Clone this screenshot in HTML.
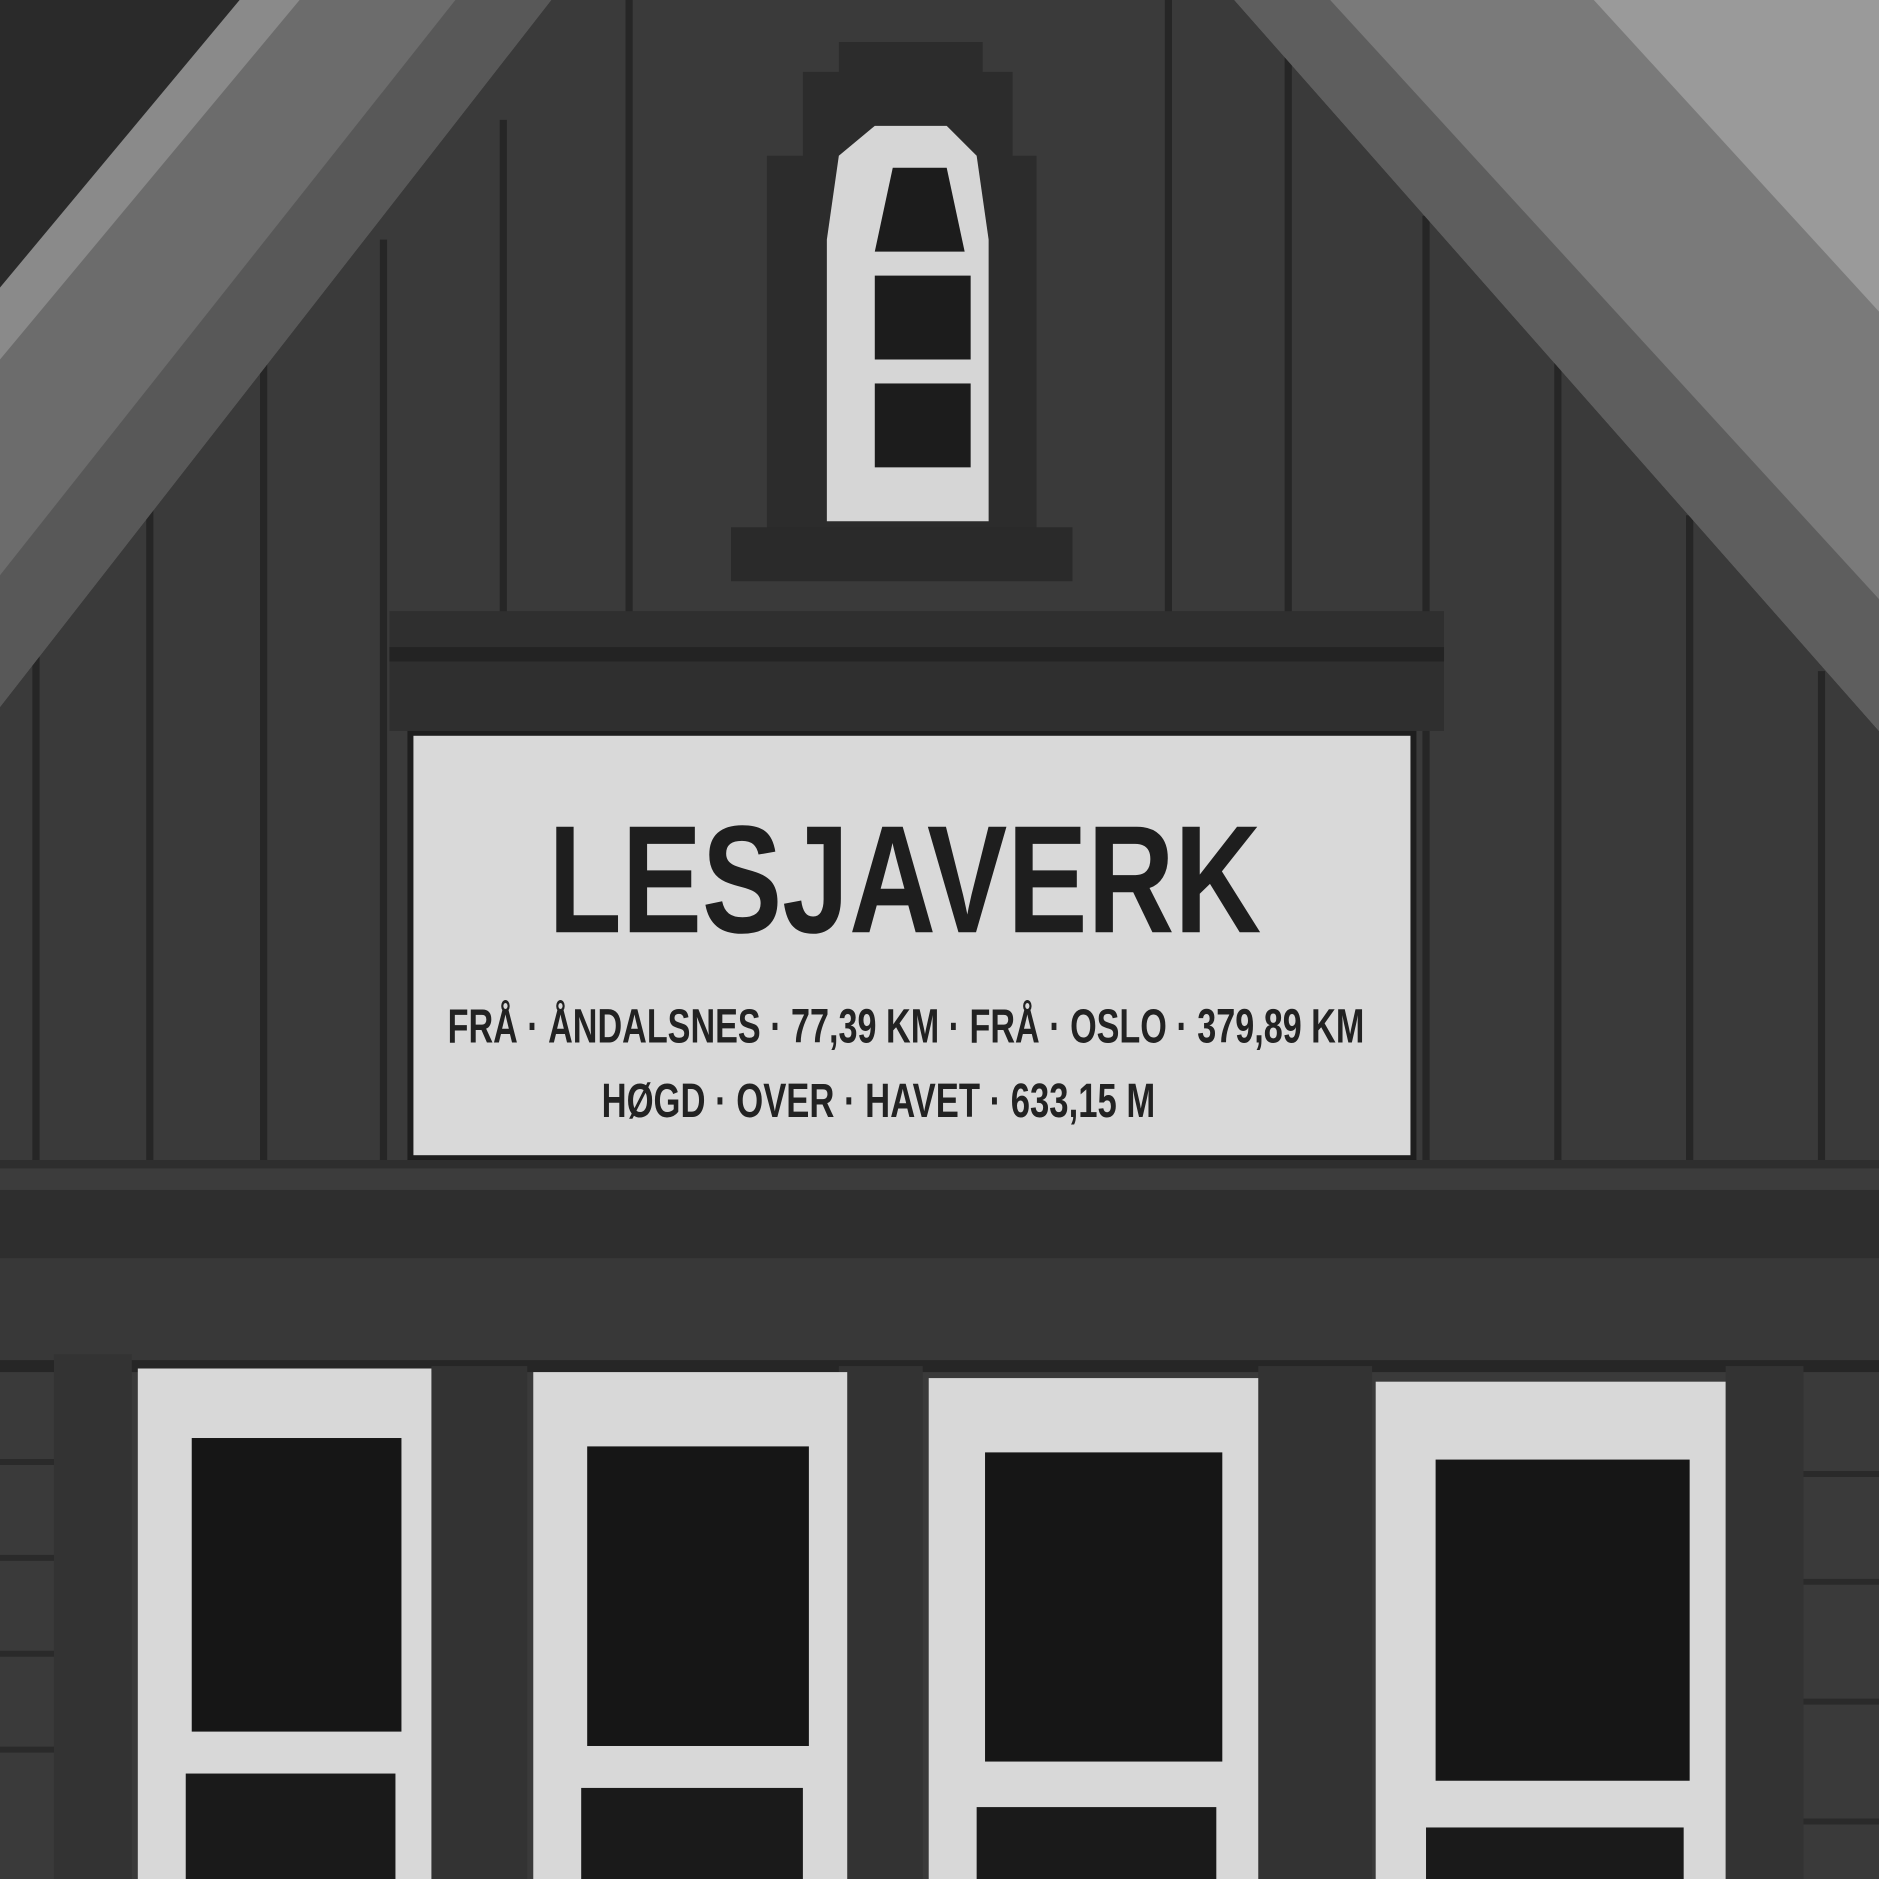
<!DOCTYPE html>
<html><head><style>html,body{margin:0;padding:0;background:#333}svg{display:block}</style></head>
<body>
<svg width="1879" height="1879" viewBox="0 0 1568 1568" xmlns="http://www.w3.org/2000/svg">
<rect width="1568" height="1568" fill="#3a3a3a"/>
<!-- vertical boards -->
<g stroke="#262626" stroke-width="6">
<line x1="30" y1="500" x2="30" y2="970"/><line x1="125" y1="400" x2="125" y2="970"/><line x1="220" y1="300" x2="220" y2="970"/>
<line x1="320" y1="200" x2="320" y2="970"/><line x1="420" y1="100" x2="420" y2="530"/><line x1="525" y1="0" x2="525" y2="530"/>
<line x1="975" y1="0" x2="975" y2="520"/><line x1="1075" y1="30" x2="1075" y2="520"/><line x1="1190" y1="180" x2="1190" y2="970"/>
<line x1="1300" y1="300" x2="1300" y2="970"/><line x1="1410" y1="430" x2="1410" y2="970"/><line x1="1520" y1="560" x2="1520" y2="970"/>
</g>
<!-- left roof -->
<polygon points="0,0 200,0 0,240" fill="#2a2a2a"/>
<polygon points="200,0 460,0 0,590 0,240" fill="#6c6c6c"/>
<polygon points="200,0 250,0 0,300 0,240" fill="#8a8a8a"/>
<polygon points="380,0 460,0 0,590 0,480" fill="#585858"/>
<!-- right roof -->
<polygon points="1030,0 1568,0 1568,610" fill="#7a7a7a"/>
<polygon points="1030,0 1110,0 1568,500 1568,610" fill="#5e5e5e"/>
<polygon points="1330,0 1568,0 1568,260" fill="#9a9a9a"/>
<!-- small window -->
<polygon points="640,130 670,130 670,60 700,60 700,35 820,35 820,60 845,60 845,130 865,130 865,450 640,450" fill="#2c2c2c"/>
<polygon points="700,130 730,105 790,105 815,130 825,200 825,435 690,435 690,200" fill="#d6d6d6"/>
<polygon points="745,140 790,140 805,210 730,210" fill="#1c1c1c"/>
<rect x="730" y="230" width="80" height="70" fill="#1c1c1c"/>
<rect x="730" y="320" width="80" height="70" fill="#1c1c1c"/>
<rect x="610" y="440" width="285" height="45" fill="#2a2a2a"/>
<!-- header beam -->
<rect x="325" y="510" width="880" height="100" fill="#2f2f2f"/>
<rect x="325" y="540" width="880" height="12" fill="#232323"/>
<!-- sign -->
<rect x="340" y="610" width="842" height="358" fill="#1e1e1e"/>
<rect x="345" y="614" width="832" height="350" fill="#d9d9d9"/>
<text x="755" y="778" text-anchor="middle" font-family="Liberation Sans, sans-serif" font-weight="bold" font-size="128" fill="#1e1e1e" textLength="595" lengthAdjust="spacingAndGlyphs">LESJAVERK</text>
<text x="756" y="870" text-anchor="middle" font-family="Liberation Sans, sans-serif" font-weight="bold" font-size="40" fill="#222" textLength="765" lengthAdjust="spacingAndGlyphs">FRÅ · ÅNDALSNES · 77,39 KM · FRÅ · OSLO · 379,89 KM</text>
<text x="733" y="932" text-anchor="middle" font-family="Liberation Sans, sans-serif" font-weight="bold" font-size="40" fill="#222" textLength="462" lengthAdjust="spacingAndGlyphs">HØGD · OVER · HAVET · 633,15 M</text>
<!-- beams -->
<rect x="0" y="968" width="1568" height="82" fill="#2e2e2e"/>
<rect x="0" y="975" width="1568" height="18" fill="#3c3c3c"/>
<rect x="0" y="1050" width="1568" height="90" fill="#383838"/>
<rect x="0" y="1135" width="1568" height="10" fill="#262626"/>
<!-- posts -->
<g fill="#333"><rect x="45" y="1130" width="65" height="438"/><rect x="360" y="1140" width="80" height="428"/><rect x="700" y="1140" width="70" height="428"/><rect x="1050" y="1140" width="95" height="428"/><rect x="1440" y="1140" width="65" height="428"/></g>
<g stroke="#2a2a2a" stroke-width="5"><line x1="0" y1="1220" x2="45" y2="1220"/><line x1="0" y1="1300" x2="45" y2="1300"/><line x1="0" y1="1380" x2="45" y2="1380"/><line x1="0" y1="1460" x2="45" y2="1460"/><line x1="1505" y1="1230" x2="1568" y2="1230"/><line x1="1505" y1="1320" x2="1568" y2="1320"/><line x1="1505" y1="1420" x2="1568" y2="1420"/><line x1="1505" y1="1520" x2="1568" y2="1520"/></g>
<!-- windows -->
<g>
<rect x="115" y="1142" width="245" height="426" fill="#d8d8d8"/>
<rect x="160" y="1200" width="175" height="245" fill="#161616"/>
<rect x="155" y="1480" width="175" height="88" fill="#1a1a1a"/>
<rect x="445" y="1145" width="262" height="423" fill="#d8d8d8"/>
<rect x="490" y="1207" width="185" height="250" fill="#161616"/>
<rect x="485" y="1492" width="185" height="76" fill="#1a1a1a"/>
<rect x="775" y="1150" width="275" height="418" fill="#d8d8d8"/>
<rect x="822" y="1212" width="198" height="258" fill="#161616"/>
<rect x="815" y="1508" width="200" height="60" fill="#1a1a1a"/>
<rect x="1148" y="1153" width="292" height="415" fill="#d8d8d8"/>
<rect x="1198" y="1218" width="212" height="268" fill="#161616"/>
<rect x="1190" y="1525" width="215" height="43" fill="#1a1a1a"/>
</g>
</svg>
</body></html>
